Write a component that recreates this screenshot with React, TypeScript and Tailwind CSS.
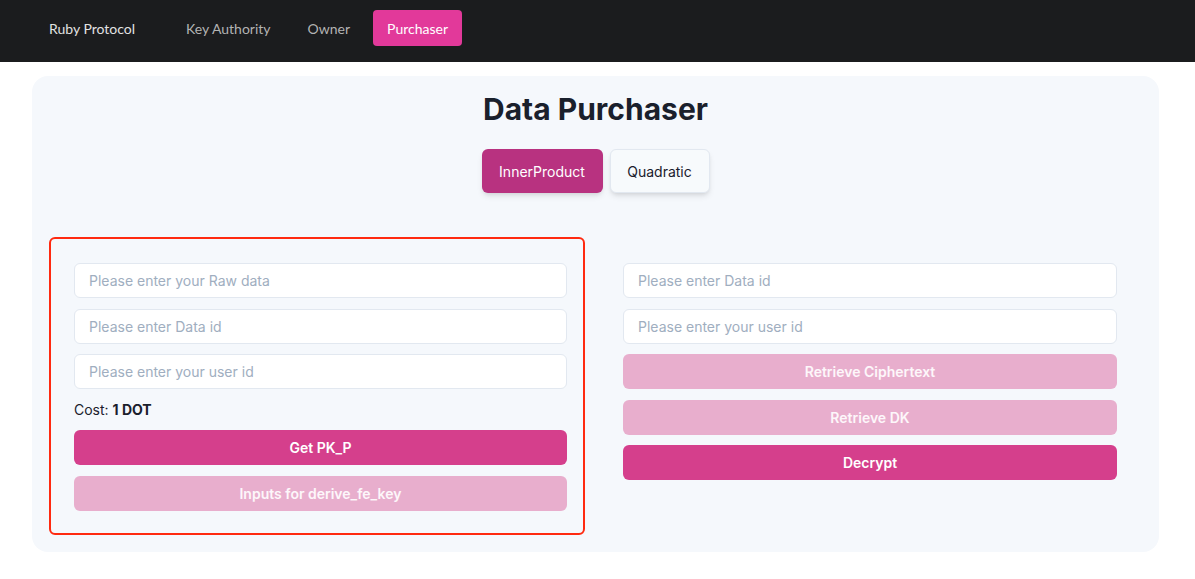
import React from 'react'

const navLinks = ['Key Authority', 'Owner']

function Field({ placeholder }: { placeholder: string }) {
  return (
    <input
      placeholder={placeholder}
      className="w-full h-[35px] rounded-[6px] border border-[#e2e8f0] bg-white px-[14px] text-[14px] text-[#1a202c] placeholder:text-[#a0aec0] outline-none"
    />
  )
}

function ActionButton({ label, disabled }: { label: string; disabled?: boolean }) {
  return (
    <button
      className={
        disabled
          ? 'w-full h-[35px] rounded-[6px] bg-[#e8aecd] text-white/90 text-[14px] font-semibold'
          : 'w-full h-[35px] rounded-[6px] bg-[#d53f8c] text-white text-[14px] font-semibold'
      }
    >
      {label}
    </button>
  )
}

export default function App() {
  return (
    <div className="min-h-[579px] bg-white font-['Inter',sans-serif]">
      {/* Top nav */}
      <nav className="h-[62px] bg-[#1b1c1e] flex items-start pt-[10px] pl-[49px] font-['Lato',sans-serif] text-[14px]">
        <span className="h-[36px] flex items-center text-[#e2e2e2] mr-[51px]">Ruby Protocol</span>
        {navLinks.map((l) => (
          <span key={l} className="h-[36px] flex items-center text-[#b3b3b3] mr-[37px]">{l}</span>
        ))}
        <span className="ml-[-14px] h-[36px] px-[14px] flex items-center rounded-[4px] bg-[#e2399a] text-white">
          Purchaser
        </span>
      </nav>

      {/* Card */}
      <div className="ml-[32px] mt-[14px] w-[1127px] rounded-[16px] bg-[#f5f8fc] pb-[17px]">
        <h1 className="pt-[15px] text-center text-[30px] leading-[36px] font-bold text-[#1a202c]">
          Data Purchaser
        </h1>

        <div className="mt-[22px] flex justify-center gap-[7px]">
          <button className="h-[44px] w-[121px] rounded-[6px] bg-[#b83280] text-white text-[14px] shadow-md">
            InnerProduct
          </button>
          <button className="h-[44px] w-[100px] rounded-[6px] border border-[#e2e8f0] bg-[#f7fafc] text-[#1a202c] text-[14px] shadow-md">
            Quadratic
          </button>
        </div>

        <div className="mt-[44px] flex gap-[13px] pl-[17px]">
          {/* Left panel */}
          <div className="w-[536px] rounded-[6px] border-2 border-[#ff2a10] pl-[23px] pr-[16px] pt-[24px] pb-[22px] flex flex-col gap-[10.5px]">
            <Field placeholder="Please enter your Raw data" />
            <Field placeholder="Please enter Data id" />
            <Field placeholder="Please enter your user id" />
            <div className="text-[14px] leading-[20px] text-[#1a202c]">
              Cost: <span className="font-bold">1 DOT</span>
            </div>
            <ActionButton label="Get PK_P" />
            <ActionButton label="Inputs for derive_fe_key" disabled />
          </div>

          {/* Right panel */}
          <div className="w-[537px] border-2 border-transparent pl-[23px] pr-[16px] pt-[24px] flex flex-col gap-[10.5px]">
            <Field placeholder="Please enter Data id" />
            <Field placeholder="Please enter your user id" />
            <ActionButton label="Retrieve Ciphertext" disabled />
            <ActionButton label="Retrieve DK" disabled />
            <ActionButton label="Decrypt" />
          </div>
        </div>
      </div>
    </div>
  )
}
